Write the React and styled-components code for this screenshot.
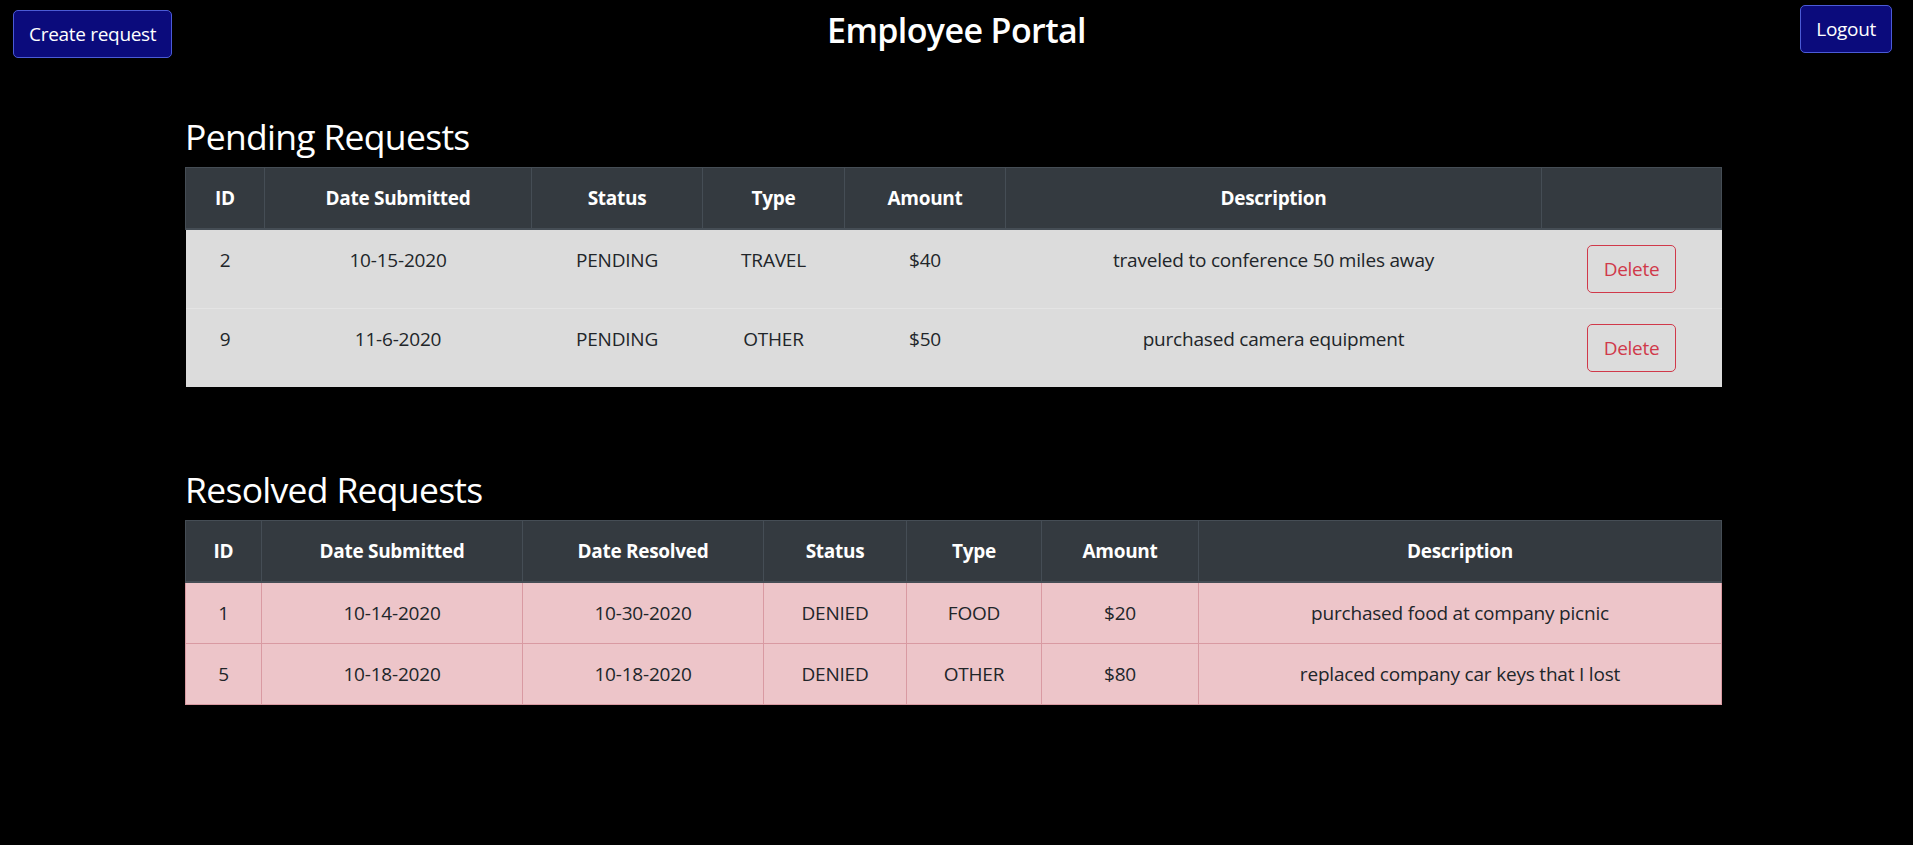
import React from 'react';
import styled, { createGlobalStyle } from 'styled-components';

const GlobalStyle = createGlobalStyle`
  html, body {
    margin: 0;
    padding: 0;
    background: #000;
  }
  body {
    font-family: "Open Sans", "Noto Sans", sans-serif;
    color: #212529;
    font-size: 20px;
    line-height: 1.5;
  }
  * {
    box-sizing: border-box;
  }
`;

const Page = styled.div`
  min-height: 845px;
  background: #000;
  padding-bottom: 40px;
`;

const TopBar = styled.header`
  display: grid;
  grid-template-columns: 1fr auto 1fr;
  align-items: start;
`;

const NavyButton = styled.button`
  font-family: inherit;
  font-size: 19px;
  line-height: 30px;
  padding: 8px 15px;
  color: #fff;
  background: #0b0b7c;
  border: 1px solid #4b5bd6;
  border-radius: 5px;
  cursor: pointer;
  letter-spacing: -0.3px;
  justify-self: ${({ $align }) => $align};
  margin: ${({ $margin }) => $margin};
`;

const Title = styled.h1`
  margin: 9px 0 0;
  font-size: 34px;
  line-height: 42px;
  font-weight: 600;
  color: #fff;
  letter-spacing: -0.6px;
`;

const Main = styled.main`
  width: 1536px;
  margin-left: 185px;
`;

const SectionTitle = styled.h2`
  margin: ${({ $top }) => $top}px 0 7px;
  font-size: 35.5px;
  line-height: 48px;
  font-weight: 500;
  color: #fff;
  letter-spacing: -0.7px;
`;

const Table = styled.table`
  width: 100%;
  table-layout: fixed;
  border-collapse: collapse;
  text-align: center;
`;

const HeadCell = styled.th`
  width: ${({ $w }) => $w}px;
  padding: 15px;
  background: #343a40;
  color: #fff;
  font-weight: 700;
  font-size: 19px;
  line-height: 30px;
  border: 1px solid #454d55;
  border-bottom: 2px solid #454d55;
  letter-spacing: -0.3px;
`;

const Row = styled.tr`
  background: ${({ $tone }) => ($tone === 'danger' ? '#edc5c9' : '#dcdcdc')};
`;

const Cell = styled.td`
  padding: 15px;
  font-size: 19px;
  line-height: 30px;
  color: #212529;
  vertical-align: ${({ $valign }) => $valign || 'middle'};
  border-top: 1px solid ${({ $tone }) => ($tone === 'danger' ? '#d99aa2' : '#e4e4e4')};
  border-left: ${({ $tone }) => ($tone === 'danger' ? '1px solid #d99aa2' : 'none')};
  border-right: ${({ $tone }) => ($tone === 'danger' ? '1px solid #d99aa2' : 'none')};
  border-bottom: ${({ $tone }) => ($tone === 'danger' ? '1px solid #d99aa2' : 'none')};
  letter-spacing: -0.2px;
`;

const DeleteButton = styled.button`
  font-family: inherit;
  font-size: 19px;
  line-height: 30px;
  padding: 8px 15px;
  width: 89px;
  color: #d0394a;
  background: transparent;
  border: 1px solid #d0394a;
  border-radius: 5px;
  cursor: pointer;
  letter-spacing: -0.3px;
`;

const pending = [
  { id: 2, date: '10-15-2020', status: 'PENDING', type: 'TRAVEL', amount: '$40', desc: 'traveled to conference 50 miles away' },
  { id: 9, date: '11-6-2020', status: 'PENDING', type: 'OTHER', amount: '$50', desc: 'purchased camera equipment' },
];

const resolved = [
  { id: 1, date: '10-14-2020', resolved: '10-30-2020', status: 'DENIED', type: 'FOOD', amount: '$20', desc: 'purchased food at company picnic' },
  { id: 5, date: '10-18-2020', resolved: '10-18-2020', status: 'DENIED', type: 'OTHER', amount: '$80', desc: 'replaced company car keys that I lost' },
];

const pendingCols = [
  ['ID', 79], ['Date Submitted', 267], ['Status', 171], ['Type', 142],
  ['Amount', 161], ['Description', 536], ['', 180],
];

const resolvedCols = [
  ['ID', 76], ['Date Submitted', 261], ['Date Resolved', 241], ['Status', 143],
  ['Type', 135], ['Amount', 157], ['Description', 523],
];

export default function App() {
  return (
    <Page>
      <GlobalStyle />
      <TopBar>
        <NavyButton $align="start" $margin="10px 0 0 13px">Create request</NavyButton>
        <Title>Employee Portal</Title>
        <NavyButton $align="end" $margin="5px 21px 0 0">Logout</NavyButton>
      </TopBar>
      <Main>
        <SectionTitle $top={54}>Pending Requests</SectionTitle>
        <Table>
          <thead>
            <tr>
              {pendingCols.map(([label, w], i) => (
                <HeadCell key={i} $w={w}>{label}</HeadCell>
              ))}
            </tr>
          </thead>
          <tbody>
            {pending.map((r) => (
              <Row key={r.id}>
                <Cell $valign="top">{r.id}</Cell>
                <Cell $valign="top">{r.date}</Cell>
                <Cell $valign="top">{r.status}</Cell>
                <Cell $valign="top">{r.type}</Cell>
                <Cell $valign="top">{r.amount}</Cell>
                <Cell $valign="top">{r.desc}</Cell>
                <Cell $valign="top"><DeleteButton>Delete</DeleteButton></Cell>
              </Row>
            ))}
          </tbody>
        </Table>

        <SectionTitle $top={78}>Resolved Requests</SectionTitle>
        <Table>
          <thead>
            <tr>
              {resolvedCols.map(([label, w], i) => (
                <HeadCell key={i} $w={w}>{label}</HeadCell>
              ))}
            </tr>
          </thead>
          <tbody>
            {resolved.map((r) => (
              <Row key={r.id} $tone="danger">
                <Cell $tone="danger">{r.id}</Cell>
                <Cell $tone="danger">{r.date}</Cell>
                <Cell $tone="danger">{r.resolved}</Cell>
                <Cell $tone="danger">{r.status}</Cell>
                <Cell $tone="danger">{r.type}</Cell>
                <Cell $tone="danger">{r.amount}</Cell>
                <Cell $tone="danger">{r.desc}</Cell>
              </Row>
            ))}
          </tbody>
        </Table>
      </Main>
    </Page>
  );
}
